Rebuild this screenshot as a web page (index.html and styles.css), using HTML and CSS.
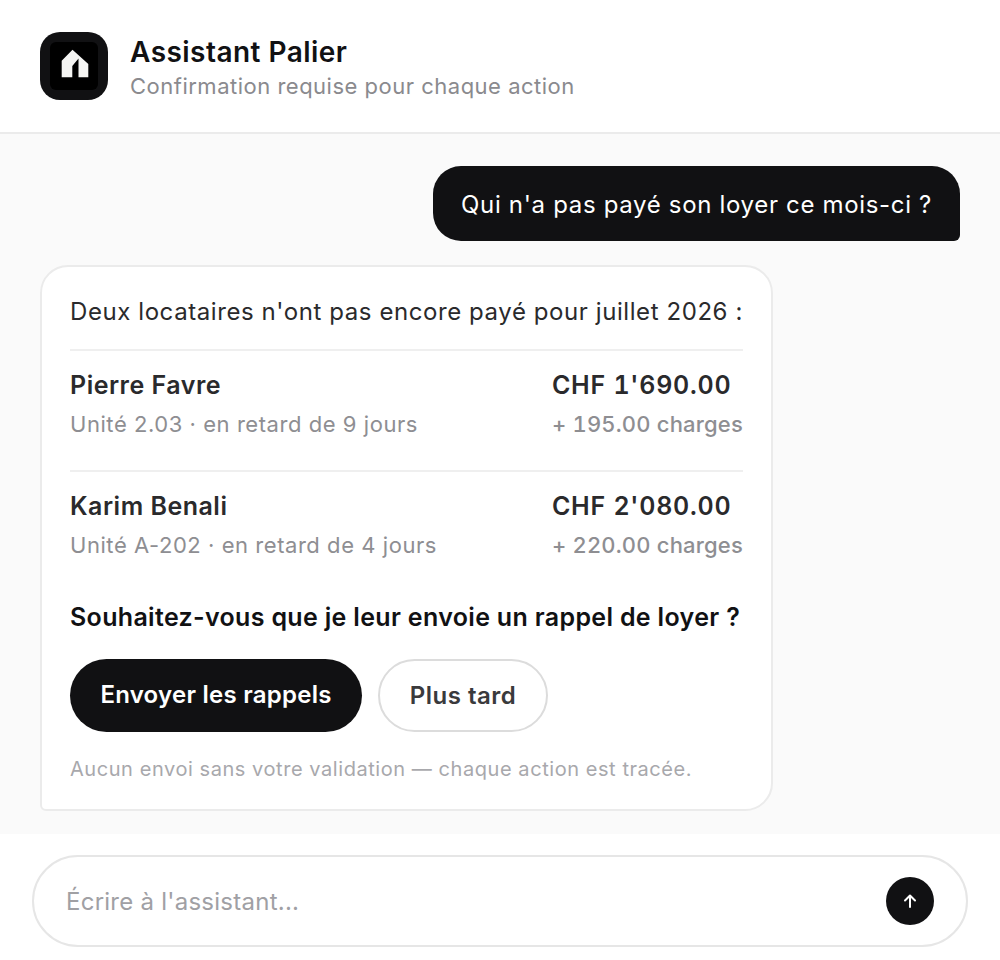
FILE: index.html
```html
<!DOCTYPE html>
<html lang="fr">

<head>
    <meta charset="UTF-8">
    <meta name="viewport" content="width=device-width, initial-scale=1.0">
    <title>Assistant Palier</title>
    <link rel="stylesheet" href="styles.css">
</head>

<body>
    <article id="app">
        <header class="top-bar">
            <div class="logo">
                <div class="logo-inner">
                    <svg width="48" height="48" viewBox="0 0 48 48">
                        <path d="M22.5 7.7 L38.3 22 V35.3 H28.5 V16.5 L22.3 24 V35.3 H11.7 V18.7 Z" fill="#f5f5f3" />
                    </svg>
                </div>
            </div>
            <div class="head-text">
                <h1 class="title">Assistant Palier</h1>
                <p class="subtitle">Confirmation requise pour chaque action</p>
            </div>
        </header>

        <main class="chat">
            <div class="bubble-user">Qui n'a pas payé son loyer ce mois-ci ?</div>

            <section class="card">
                <p class="intro">Deux locataires n'ont pas encore payé pour juillet 2026 :</p>
                <ul class="tenants">
                    <li class="tenant">
                        <div>
                            <div class="name">Pierre Favre</div>
                            <div class="detail">Unité 2.03 · en retard de 9 jours</div>
                        </div>
                        <div class="amounts">
                            <div class="amount">CHF 1'690.00</div>
                            <div class="charges">+ 195.00 charges</div>
                        </div>
                    </li>
                    <li class="tenant">
                        <div>
                            <div class="name">Karim Benali</div>
                            <div class="detail">Unité A-202 · en retard de 4 jours</div>
                        </div>
                        <div class="amounts">
                            <div class="amount">CHF 2'080.00</div>
                            <div class="charges">+ 220.00 charges</div>
                        </div>
                    </li>
                </ul>
                <p class="question">Souhaitez-vous que je leur envoie un rappel de loyer ?</p>
                <div class="actions">
                    <button class="btn btn-primary">Envoyer les rappels</button>
                    <button class="btn btn-secondary">Plus tard</button>
                </div>
                <p class="note">Aucun envoi sans votre validation — chaque action est tracée.</p>
            </section>
        </main>

        <footer class="composer">
            <div class="input-box">
                <span class="placeholder">Écrire à l'assistant...</span>
                <span class="send">
                    <svg width="16" height="16" viewBox="0 0 16 16" fill="none" stroke="#fff" stroke-width="2"
                        stroke-linecap="round" stroke-linejoin="round">
                        <path d="M8 14 V2.5 M3 7.5 L8 2.5 L13 7.5" />
                    </svg>
                </span>
            </div>
        </footer>
    </article>
</body>

</html>
```

FILE: styles.css
```css
* {
    box-sizing: border-box;
}

body {
    margin: 0;
    background: #fff;
    font-family: Inter, "Liberation Sans", sans-serif;
    color: #111113;
}

#app {
    width: 1000px;
    height: 960px;
    display: flex;
    flex-direction: column;
}

p,
h1,
ul {
    margin: 0;
    padding: 0;
}

.top-bar {
    height: 134px;
    display: flex;
    align-items: center;
    gap: 22px;
    padding: 0 40px;
    border-bottom: 2px solid #ebebeb;
}

.logo {
    width: 68px;
    height: 68px;
    border-radius: 20px;
    background: #111113;
    display: flex;
    align-items: center;
    justify-content: center;
}

.logo-inner {
    width: 48px;
    height: 48px;
    border-radius: 6px;
    background: #000;
}

.logo-inner svg {
    display: block;
}

.head-text {
    padding-top: 4px;
}

.title {
    font-size: 28px;
    line-height: 34px;
    font-weight: 600;
    letter-spacing: 0.46px;
}

.subtitle {
    margin-top: 2px;
    font-size: 22px;
    line-height: 30px;
    letter-spacing: 0.5px;
    color: #8a8a8e;
}

.chat {
    height: 700px;
    background: #fafafa;
    padding: 32px 40px 0;
    display: flex;
    flex-direction: column;
}

.bubble-user {
    align-self: flex-end;
    height: 75px;
    padding: 1px 28px 0;
    display: flex;
    align-items: center;
    background: #111113;
    color: #fff;
    font-size: 24px;
    letter-spacing: 0.67px;
    border-radius: 28px 28px 6px 28px;
}

.card {
    width: 733px;
    height: 546px;
    margin-top: 24px;
    padding: 28px;
    background: #fff;
    border: 2px solid #ebebeb;
    border-radius: 28px 28px 28px 6px;
}

.intro {
    font-size: 24px;
    line-height: 34px;
    letter-spacing: 0.58px;
    white-space: nowrap;
    color: #2a2a2c;
}

.tenants {
    list-style: none;
    margin-top: 20px;
}

.tenant {
    height: 121px;
    padding-top: 17px;
    display: flex;
    justify-content: space-between;
    border-top: 2px solid #efefef;
}

.name,
.amount {
    font-size: 25px;
    line-height: 34px;
    font-weight: 600;
    letter-spacing: 0.5px;
    color: #2a2a2c;
}

.detail,
.charges {
    margin-top: 7px;
    font-size: 22px;
    line-height: 30px;
    letter-spacing: 0.55px;
    color: #8e8e92;
}

.amounts {
    font-variant-numeric: tabular-nums;
}

.amount {
    letter-spacing: 0.75px;
}

.charges {
    font-weight: 500;
    letter-spacing: 0.18px;
}

.question {
    margin-top: 9px;
    font-size: 25px;
    line-height: 34px;
    font-weight: 600;
    letter-spacing: 0.33px;
}

.actions {
    display: flex;
    gap: 16px;
    margin-top: 25px;
}

.btn {
    height: 73px;
    border-radius: 37px;
    font-family: inherit;
    font-size: 24px;
    font-weight: 600;
    letter-spacing: 0.25px;
}

.btn-primary {
    width: 292px;
    padding-bottom: 3px;
    border: none;
    background: #111113;
    color: #fff;
}

.btn-secondary {
    width: 170px;
    border: 2px solid #dcdcdc;
    background: #fff;
    color: #3a3a3c;
    letter-spacing: 0.5px;
}

.note {
    margin-top: 22px;
    font-size: 20px;
    line-height: 30px;
    letter-spacing: 0.56px;
    color: #a8a8ac;
}

.composer {
    flex: 1;
    padding: 21px 32px 0;
    background: #fff;
}

.input-box {
    height: 92px;
    display: flex;
    align-items: center;
    justify-content: space-between;
    padding: 0 32px;
    border: 2px solid #e6e6e6;
    border-radius: 46px;
}

.placeholder {
    font-size: 24px;
    letter-spacing: 0.25px;
    color: #a0a0a4;
}

.send {
    width: 48px;
    height: 48px;
    border-radius: 50%;
    background: #111113;
    display: flex;
    align-items: center;
    justify-content: center;
}
```
